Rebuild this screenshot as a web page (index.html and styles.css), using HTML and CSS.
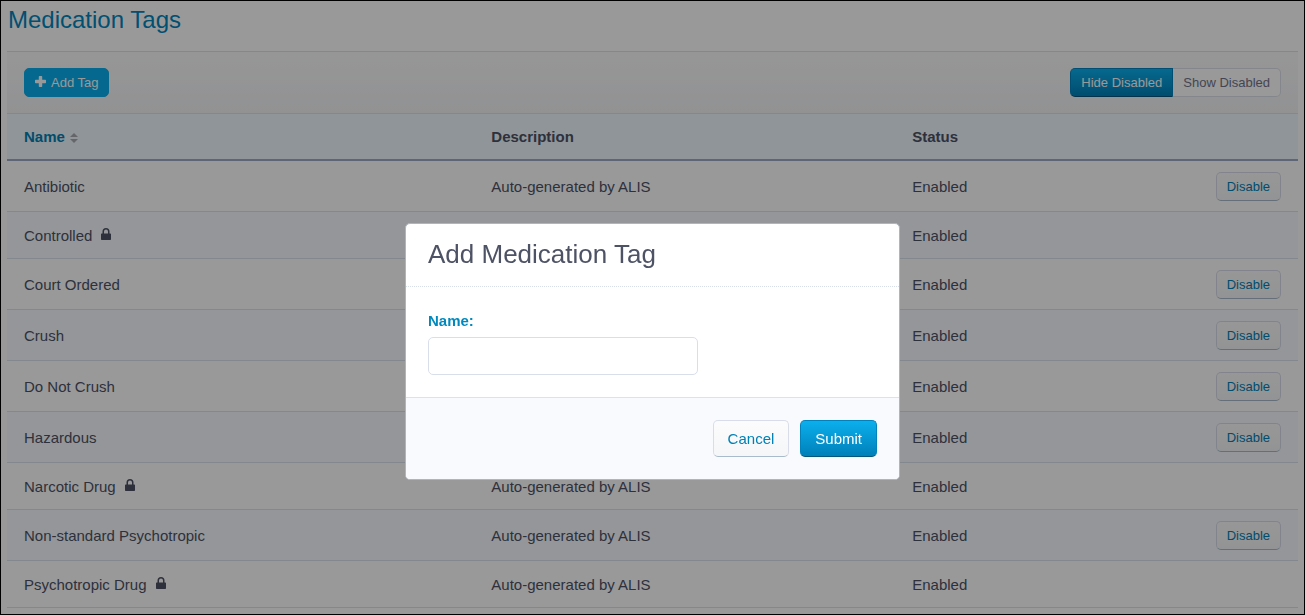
FILE: index.html
```html
<!DOCTYPE html>
<html lang="en">
<head>
<meta charset="utf-8">
<meta name="viewport" content="width=device-width, initial-scale=1">
<title>Medication Tags</title>
<link rel="stylesheet" href="styles.css">
</head>
<body>
<svg class="sprite" aria-hidden="true">
  <symbol id="lock" viewBox="0 0 10 12"><path fill-rule="evenodd" d="M1.500 5.500V3.500a3.500 3.500 0 0 1 7 0v2h.8q.7 0 .7.7v5.100q0 .7-.7.7H.7Q0 12 0 11.300V6.200Q0 5.500.7 5.500zM3 5.500h4V3.500a2 2 0 0 0-4 0z"/></symbol>
</svg>
<main class="page">
  <h1 class="page-title">Medication Tags</h1>
  <div class="toolbar">
    <button class="btn btn-small btn-add" type="button"><svg class="icon-plus" viewBox="0 0 11 11" aria-hidden="true"><path d="M4.500 0h2q.7 0 .7.7v3.100h3.100q.7 0 .7.7v2q0 .7-.7.7H7.200v3.100q0 .7-.7.7h-2q-.7 0-.7-.7V7.200H.7Q0 7.200 0 6.500v-2q0-.7.7-.7h3.100V.7q0-.7.7-.7z"/></svg>Add Tag</button>
    <div class="btn-group">
      <button class="btn btn-small btn-primary" type="button" aria-pressed="true">Hide Disabled</button>
      <button class="btn btn-small btn-plain" type="button" aria-pressed="false">Show Disabled</button>
    </div>
  </div>
  <table class="tags">
    <thead>
      <tr><th class="col-name sorted" scope="col">Name<svg class="icon-sort" viewBox="0 0 8 10" aria-hidden="true"><path d="M4 0l4 4H0zM0 6h8l-4 4z"/></svg></th><th class="col-description" scope="col">Description</th><th scope="col">Status</th><th class="col-action"></th></tr>
    </thead>
    <tbody>
      <tr><td>Antibiotic</td><td>Auto-generated by ALIS</td><td>Enabled</td><td class="action"><button class="btn btn-small" type="button">Disable</button></td></tr>
      <tr><td>Controlled<svg class="icon-lock" role="img" aria-label="Locked"><use href="#lock"/></svg></td><td>Auto-generated by ALIS</td><td>Enabled</td><td></td></tr>
      <tr><td>Court Ordered</td><td>Auto-generated by ALIS</td><td>Enabled</td><td class="action"><button class="btn btn-small" type="button">Disable</button></td></tr>
      <tr><td>Crush</td><td>Auto-generated by ALIS</td><td>Enabled</td><td class="action"><button class="btn btn-small" type="button">Disable</button></td></tr>
      <tr><td>Do Not Crush</td><td>Auto-generated by ALIS</td><td>Enabled</td><td class="action"><button class="btn btn-small" type="button">Disable</button></td></tr>
      <tr><td>Hazardous</td><td>Auto-generated by ALIS</td><td>Enabled</td><td class="action"><button class="btn btn-small" type="button">Disable</button></td></tr>
      <tr><td>Narcotic Drug<svg class="icon-lock" role="img" aria-label="Locked"><use href="#lock"/></svg></td><td>Auto-generated by ALIS</td><td>Enabled</td><td></td></tr>
      <tr><td>Non-standard Psychotropic</td><td>Auto-generated by ALIS</td><td>Enabled</td><td class="action"><button class="btn btn-small" type="button">Disable</button></td></tr>
      <tr><td>Psychotropic Drug<svg class="icon-lock" role="img" aria-label="Locked"><use href="#lock"/></svg></td><td>Auto-generated by ALIS</td><td>Enabled</td><td></td></tr>
    </tbody>
  </table>
</main>
<div class="overlay">
  <form class="modal" role="dialog" aria-modal="true" aria-labelledby="modal-title">
    <h2 class="modal-title" id="modal-title">Add Medication Tag</h2>
    <div class="modal-body">
      <label class="field-label" for="tag-name">Name:</label>
      <input class="field" id="tag-name" type="text">
    </div>
    <div class="modal-footer">
      <button class="btn" type="button">Cancel</button>
      <button class="btn btn-primary" type="submit">Submit</button>
    </div>
  </form>
</div>
</body>
</html>
```
FILE: styles.css
```css
* {
  box-sizing: border-box;
}

body {
  margin: 0;
  background: #fff;
  color: #4d5265;
  font-family: "Liberation Sans", Arial, sans-serif;
  font-size: 15px;
  line-height: 20px;
}

.sprite {
  display: none;
}

.page {
  padding: 4px 7px 7px;
}

.page-title {
  margin: 0;
  padding: 0 1px 15px;
  color: #0086be;
  font-size: 24px;
  font-weight: 400;
  line-height: 32px;
}

.toolbar {
  display: flex;
  align-items: center;
  justify-content: space-between;
  padding: 16px 17px;
  border-top: 1px solid #dae3ee;
  background: linear-gradient(#fbfbfc, #f3f4f6);
}

.btn {
  padding: 8px 14px;
  border: 1px solid #d8dde9;
  border-bottom-color: #a9bacb;
  border-radius: 5px;
  background: linear-gradient(#fcfcfd, #f5f6f8);
  color: #0080b5;
  font: inherit;
  line-height: 19px;
  cursor: pointer;
}

.btn-small {
  padding: 4px 10px;
  font-size: 13px;
}

.btn-add {
  display: flex;
  align-items: center;
  gap: 5px;
  border-color: #09aeed;
  background: #09aeed;
  color: #fff;
}

.btn-primary {
  border-color: #0083bd;
  border-bottom-color: #00567d;
  background: linear-gradient(#0bafed, #0080b9);
  color: #fff;
}

.btn-plain {
  border-color: #dae0ec;
  background: #fff;
  color: #72748c;
}

.btn-group {
  display: flex;
}

.btn-group .btn:first-child {
  border-radius: 5px 0 0 5px;
}

.btn-group .btn:last-child {
  border-left: 0;
  border-radius: 0 5px 5px 0;
}

.icon-plus {
  width: 11px;
  height: 11px;
  margin-bottom: 2px;
  fill: currentColor;
}

.tags {
  width: 100%;
  border-collapse: separate;
  border-spacing: 0;
  table-layout: fixed;
}

.col-name {
  width: 36.2%;
}

.col-description {
  width: 32.6%;
}

.col-action {
  width: 12%;
}

.tags th {
  height: 48px;
  padding: 0 17px;
  border-top: 1px solid #dae3ee;
  border-bottom: 2px solid #9ba9c6;
  background: #eff8fe;
  text-align: left;
}

.tags .sorted {
  color: #0080b5;
}

.icon-sort {
  width: 8px;
  height: 10px;
  margin-left: 5px;
  fill: #a9aab0;
  vertical-align: -1px;
}

.tags td {
  height: 47px;
  padding: 11px 17px 10px;
  border-bottom: 1px solid #dae3ee;
}

.tags tbody tr:nth-child(even) {
  background: #f8fbff;
}

.tags .action {
  text-align: right;
}

.action .btn {
  display: block;
  margin-left: auto;
}

.icon-lock {
  width: 10px;
  height: 12px;
  margin-left: 9px;
  fill: currentColor;
  vertical-align: 1px;
}

.overlay {
  position: fixed;
  inset: 0;
  display: flex;
  align-items: flex-start;
  justify-content: center;
  padding: 222px 16px 16px;
  border: 1px solid #000;
  background: rgba(0, 0, 0, 0.4);
}

.modal {
  width: 100%;
  max-width: 495px;
  overflow: hidden;
  border: 1px solid #a9b6c9;
  border-radius: 5px;
  background: #fff;
}

.modal-title {
  margin: 0;
  padding: 14px 22px 16px;
  border-bottom: 1px dotted #d7deea;
  font-size: 26px;
  font-weight: 400;
  line-height: 32px;
}

.modal-body {
  display: grid;
  justify-items: start;
  gap: 6px;
  padding: 24px 22px 22px;
}

.field-label {
  color: #0089be;
  font-weight: 700;
}

.field {
  width: 100%;
  max-width: 270px;
  height: 38px;
  padding: 0 10px;
  border: 1px solid #d9deeb;
  border-radius: 5px;
  background: #fff;
  color: inherit;
  font: inherit;
}

.modal-footer {
  display: flex;
  justify-content: flex-end;
  gap: 11px;
  padding: 22px;
  border-top: 1px solid #dae2eb;
  background: #f8fafd;
}
```
